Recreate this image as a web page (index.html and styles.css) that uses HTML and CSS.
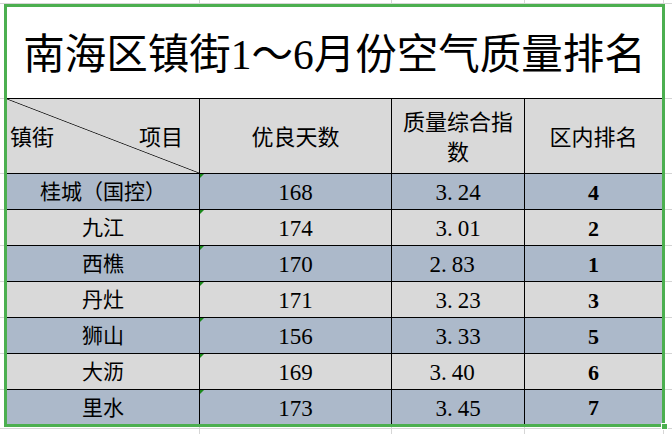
FILE: index.html
```html
<!DOCTYPE html>
<html lang="zh-CN">
<head>
<meta charset="utf-8">
<title>南海区镇街1～6月份空气质量排名</title>
<link rel="stylesheet" href="styles.css">
</head>
<body>
<div class="sheet">
  <div class="grid">
    <div class="title">南海区镇街1～6月份空气质量排名</div>
    <div class="hd diag"><span>镇街</span><span>项目</span></div>
    <div class="hd">优良天数</div>
    <div class="hd"><span class="wrap">质量综合指数</span></div>
    <div class="hd">区内排名</div>

    <div class="c name b">桂城（国控）</div>
    <div class="c num b tri">168</div>
    <div class="c num b">3<span class="dot">.</span>24</div>
    <div class="c rank b">4</div>

    <div class="c name g">九江</div>
    <div class="c num g tri">174</div>
    <div class="c num g">3<span class="dot">.</span>01</div>
    <div class="c rank g">2</div>

    <div class="c name b">西樵</div>
    <div class="c num b tri">170</div>
    <div class="c num b l">2<span class="dot">.</span>83</div>
    <div class="c rank b">1</div>

    <div class="c name g">丹灶</div>
    <div class="c num g tri">171</div>
    <div class="c num g">3<span class="dot">.</span>23</div>
    <div class="c rank g">3</div>

    <div class="c name b">狮山</div>
    <div class="c num b tri">156</div>
    <div class="c num b">3<span class="dot">.</span>33</div>
    <div class="c rank b">5</div>

    <div class="c name g">大沥</div>
    <div class="c num g tri">169</div>
    <div class="c num g l">3<span class="dot">.</span>40</div>
    <div class="c rank g">6</div>

    <div class="c name b">里水</div>
    <div class="c num b tri">173</div>
    <div class="c num b">3<span class="dot">.</span>45</div>
    <div class="c rank b">7</div>
  </div>
  <div class="handle"></div>
</div>
</body>
</html>
```
FILE: styles.css
```css
html, body {
  margin: 0;
  padding: 0;
}

body {
  width: 672px;
  height: 434px;
  overflow: hidden;
  font-family: "Liberation Serif", "Noto Sans CJK SC", serif;
  color: #000;
  background:
    linear-gradient(#d6d6d6, #d6d6d6) 0 3px / 100% 1px no-repeat,
    linear-gradient(#d6d6d6, #d6d6d6) 0 98px / 100% 1px no-repeat,
    linear-gradient(#d6d6d6, #d6d6d6) 0 173px / 100% 1px no-repeat,
    linear-gradient(#d6d6d6, #d6d6d6) 0 209px / 100% 1px no-repeat,
    linear-gradient(#d6d6d6, #d6d6d6) 0 245px / 100% 1px no-repeat,
    linear-gradient(#d6d6d6, #d6d6d6) 0 281px / 100% 1px no-repeat,
    linear-gradient(#d6d6d6, #d6d6d6) 0 317px / 100% 1px no-repeat,
    linear-gradient(#d6d6d6, #d6d6d6) 0 353px / 100% 1px no-repeat,
    linear-gradient(#d6d6d6, #d6d6d6) 0 389px / 100% 1px no-repeat,
    linear-gradient(#d6d6d6, #d6d6d6) 0 428px / 100% 1px no-repeat,
    linear-gradient(#d6d6d6, #d6d6d6) 199px 0 / 1px 100% no-repeat,
    linear-gradient(#d6d6d6, #d6d6d6) 391px 0 / 1px 100% no-repeat,
    linear-gradient(#d6d6d6, #d6d6d6) 524px 0 / 1px 100% no-repeat,
    linear-gradient(#d6d6d6, #d6d6d6) 663px 0 / 1px 100% no-repeat,
    #ffffff;
}

.sheet {
  position: relative;
  margin: 4px 0 0 4px;
  width: 655px;
  border: 3px solid #4caf50;
}

.grid {
  display: grid;
  grid-template-columns: 192px 191px 132px 137px;
  grid-template-rows: 91px 74px repeat(6, 35px) 34px;
  gap: 1px;
  background: #000;
}

.title {
  grid-column: 1 / -1;
  background: #fff;
  display: flex;
  align-items: center;
  justify-content: center;
  padding-top: 7px;
  font-size: 41.5px;
  line-height: 1;
  white-space: nowrap;
}

.hd {
  background: #d9d9d9;
  display: flex;
  align-items: center;
  justify-content: center;
  padding-top: 3px;
  font-size: 22px;
  line-height: 30px;
  text-align: center;
}

.wrap {
  display: block;
  width: 112px;
}

.diag {
  justify-content: space-between;
  padding: 3px 16px 0 3px;
  background:
    linear-gradient(to top right, transparent calc(50% - 0.8px), #222 50%, transparent calc(50% + 0.8px)),
    #d9d9d9;
}

.c {
  position: relative;
  display: flex;
  align-items: center;
  justify-content: center;
  padding-top: 2px;
  line-height: 1;
  white-space: nowrap;
}

.b {
  background: #acb9ca;
}

.g {
  background: #d9d9d9;
}

.name {
  font-size: 21px;
}

.num {
  font-size: 23px;
}

.num.l {
  padding-right: 12px;
}

.dot {
  margin-right: 5px;
}

.rank {
  font-size: 22px;
  font-weight: bold;
}

.tri::before {
  content: "";
  position: absolute;
  left: 0;
  top: 0;
  border-top: 4px solid #1a8a1a;
  border-right: 4px solid transparent;
}

.handle {
  position: absolute;
  right: -6px;
  bottom: -6px;
  width: 5px;
  height: 5px;
  background: #4caf50;
  border: 1px solid #fff;
}
```
